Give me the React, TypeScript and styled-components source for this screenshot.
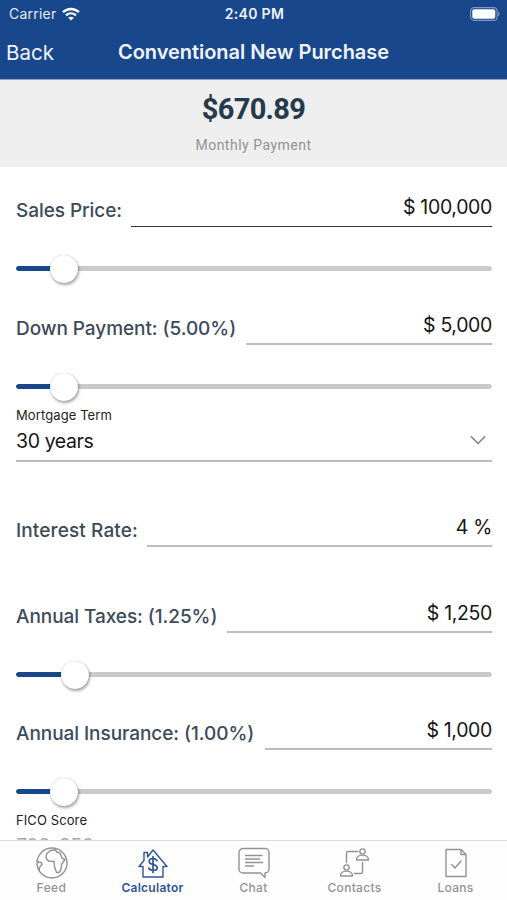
import React from "react";
import styled, { createGlobalStyle } from "styled-components";

const BLUE = "#19478c";

const Global = createGlobalStyle`
  * { box-sizing: border-box; }
  html, body { margin: 0; padding: 0; background: #fff; }
  body { font-family: Inter, "Liberation Sans", sans-serif; overflow: hidden; }
`;

const Screen = styled.div`
  width: 507px;
  height: 900px;
  display: flex;
  flex-direction: column;
  background: #fff;
  overflow: hidden;
`;

const Header = styled.header`
  flex: none;
  height: 80px;
  background: ${BLUE};
  border-bottom: 1px solid #8ba3c8;
  color: #fff;
`;

const StatusBar = styled.div`
  height: 27px;
  padding: 0 7px 0 9px;
  display: grid;
  grid-template-columns: 1fr auto 1fr;
  align-items: center;
  font-size: 14px;
`;

const Carrier = styled.div`
  display: flex;
  align-items: center;
  gap: 6px;
  color: #e3e9f3;
  letter-spacing: 0.22px;
`;

const Clock = styled.div`
  font-weight: 600;
  font-size: 14px;
  letter-spacing: 0.3px;
  color: #eef2f8;
`;

const BatteryBox = styled.div`
  display: flex;
  justify-content: flex-end;
`;

const NavBar = styled.div`
  height: 50px;
  padding: 0 6px;
  display: grid;
  grid-template-columns: 1fr auto 1fr;
  align-items: center;
`;

const Back = styled.div`
  font-size: 20.5px;
  color: #f0f4fa;
`;

const Title = styled.h1`
  margin: 0;
  font-size: 20px;
  font-weight: 600;
  letter-spacing: -0.04px;
  color: #f0f4fa;
  white-space: nowrap;
`;

const Summary = styled.section`
  flex: none;
  height: 87px;
  background: #eee;
  display: flex;
  flex-direction: column;
  align-items: center;
`;

const Amount = styled.div`
  margin-top: 11px;
  height: 36px;
  line-height: 36px;
  font-family: Roboto, sans-serif;
  font-weight: 700;
  font-size: 29px;
  letter-spacing: -0.7px;
  color: #243b4d;
`;

const Caption = styled.div`
  margin-top: 9px;
  line-height: 18px;
  font-family: Roboto, sans-serif;
  font-size: 14px;
  letter-spacing: 0.5px;
  color: #929292;
`;

const Form = styled.main`
  flex: none;
  height: 673px;
  padding: 0 15px 0 16px;
  overflow: hidden;
`;

const Row = styled.div<{ $height: number }>`
  height: ${(p) => p.$height}px;
  display: flex;
  align-items: flex-end;
  gap: 10px;
`;

const Label = styled.label<{ $width: number; $spacing?: number }>`
  flex: none;
  width: ${(p) => p.$width}px;
  height: 31px;
  line-height: 30px;
  font-size: 19px;
  font-weight: 500;
  letter-spacing: ${(p) => p.$spacing ?? -0.06}px;
  color: #3c4a5c;
  white-space: nowrap;
`;

const Value = styled.div<{ $active?: boolean }>`
  flex: 1;
  height: 35px;
  line-height: 30px;
  text-align: right;
  font-size: 19.5px;
  letter-spacing: -0.35px;
  color: #161616;
  border-bottom: ${(p) => (p.$active ? "1px solid #343136" : "2px solid #bdbdbd")};
`;

const SliderBox = styled.div<{ $height: number }>`
  height: ${(p) => p.$height}px;
  padding-top: 26px;
`;

const Track = styled.div<{ $fill: number }>`
  height: 31px;
  display: flex;
  align-items: center;
  padding-left: ${(p) => p.$fill - 14.5}px;
  background:
    linear-gradient(${BLUE}, ${BLUE}) 2px 50% / ${(p) => p.$fill}px 5px no-repeat,
    radial-gradient(circle at 2.5px 50%, ${BLUE} 2px, transparent 2.7px) no-repeat,
    radial-gradient(circle at calc(100% - 2.5px) 50%, #cacaca 2px, transparent 2.7px) no-repeat,
    linear-gradient(#cacaca, #cacaca) 2px 50% / calc(100% - 4px) 5px no-repeat;
`;

const Thumb = styled.div`
  width: 28px;
  height: 28px;
  border-radius: 50%;
  background: #fff;
  box-shadow: 0 0 1px rgba(0, 0, 0, 0.35), 1px 2px 3px rgba(0, 0, 0, 0.35);
`;

const SelectCaption = styled.div<{ $spacing?: number }>`
  height: 18px;
  line-height: 17px;
  font-size: 13px;
  letter-spacing: ${(p) => p.$spacing ?? 0.1}px;
  color: #222;
`;

const Select = styled.div<{ $faded?: boolean }>`
  height: 37px;
  display: flex;
  justify-content: space-between;
  padding: 1px 6px 0 0;
  line-height: 30px;
  font-size: 19.5px;
  letter-spacing: -0.4px;
  color: ${(p) => (p.$faded ? "#a8a8a8" : "#161616")};
  border-bottom: 2px solid #bdbdbd;
`;

const TabBar = styled.nav`
  flex: none;
  height: 60px;
  display: grid;
  grid-template-columns: repeat(5, 101px);
  justify-content: center;
  background: #fefefe;
  border-top: 1px solid #dcdcdc;
`;

const Tab = styled.div<{ $active?: boolean; $spacing: number }>`
  display: flex;
  flex-direction: column;
  align-items: center;
  padding-top: 5px;
  color: ${(p) => (p.$active ? "#2c5597" : "#929292")};
  font-size: 12px;
  font-weight: ${(p) => (p.$active ? 600 : 500)};
  letter-spacing: ${(p) => p.$spacing}px;
  line-height: 16px;
  svg { display: block; }
`;

const Glyph = ({ children }: { children: React.ReactNode }) => (
  <svg width="34" height="34" viewBox="0 0 34 34" fill="none" stroke="currentColor" strokeWidth="1.4" strokeLinejoin="round" strokeLinecap="round">
    {children}
  </svg>
);

const WifiIcon = () => (
  <svg width="18" height="14" viewBox="0 0 18 14" fill="none" stroke="#fff" strokeWidth="2.3">
    <path d="M1 5.2C5.500.9 12.500.9 17 5.200" />
    <path d="M4 8.400c2.900-2.700 7.100-2.700 10 0" />
    <path d="M9 13.600 6.200 10.800c1.600-1.400 4-1.400 5.600 0z" fill="#fff" stroke="none" />
  </svg>
);

const BatteryIcon = () => (
  <svg width="30" height="14" viewBox="0 0 30 14">
    <rect x=".6" y=".6" width="26.5" height="12.8" rx="3.5" fill="none" stroke="#8199c3" strokeWidth="1.1" />
    <rect x="2.3" y="2.3" width="23" height="9.4" rx="2" fill="#fff" />
    <path d="M28.200 4.600c1.700.6 1.700 4.200 0 4.800z" fill="#8199c3" />
  </svg>
);

const ChevronIcon = () => (
  <svg width="16" height="30" viewBox="0 0 16 30" fill="none" stroke="#858585" strokeWidth="1.5">
    <path d="M.9 10.400 8 17.500l7.100-7.100" />
  </svg>
);

const Slider = ({ fill, height }: { fill: number; height: number }) => (
  <SliderBox $height={height}>
    <Track $fill={fill}>
      <Thumb />
    </Track>
  </SliderBox>
);

export default function App() {
  return (
    <Screen>
      <Global />
      <Header>
        <StatusBar>
          <Carrier>Carrier <WifiIcon /></Carrier>
          <Clock>2:40 PM</Clock>
          <BatteryBox><BatteryIcon /></BatteryBox>
        </StatusBar>
        <NavBar>
          <Back>Back</Back>
          <Title>Conventional New Purchase</Title>
        </NavBar>
      </Header>
      <Summary>
        <Amount>$670.89</Amount>
        <Caption>Monthly Payment</Caption>
      </Summary>
      <Form>
        <Row $height={60}>
          <Label $width={105}>Sales Price:</Label>
          <Value $active>$ 100,000</Value>
        </Row>
        <Slider fill={48} height={83} />
        <Row $height={35}>
          <Label $width={220}>Down Payment: (5.00%)</Label>
          <Value>$ 5,000</Value>
        </Row>
        <Slider fill={48} height={62} />
        <SelectCaption>Mortgage Term</SelectCaption>
        <Select>30 years <ChevronIcon /></Select>
        <Row $height={85}>
          <Label $width={121} $spacing={0.12}>Interest Rate:</Label>
          <Value>4 %</Value>
        </Row>
        <Row $height={86}>
          <Label $width={201}>Annual Taxes: (1.25%)</Label>
          <Value>$ 1,250</Value>
        </Row>
        <Slider fill={59} height={82} />
        <Row $height={35}>
          <Label $width={239}>Annual Insurance: (1.00%)</Label>
          <Value>$ 1,000</Value>
        </Row>
        <Slider fill={48} height={62} />
        <SelectCaption>FICO Score</SelectCaption>
        <Select $faded>700-850</Select>
      </Form>
      <TabBar>
        <Tab $spacing={0.4}>
          <Glyph>
            <circle cx="17" cy="17" r="15" />
            <path d="M15.500 4.500 11.500 8l-.5 4 2.500 3 5.500.5.5 5 2 6h2.500l2-3 .5-5 3.500-5-3-1.500-2-5-3.500-1-1-2.300z" />
            <path d="M2.300 14.500l1.500 1.700 2.500.3.700 2-2.500 3-.3 3" />
          </Glyph>
          Feed
        </Tab>
        <Tab $active $spacing={0.28}>
          <Glyph>
            <path d="M7 31V20.500H3L8 14.500V6.500h3.500v4.500L17 4l14 16.500h-4V31z" />
            <path d="M21 14.500c-1-1.500-2.300-2-4-2-2.300 0-3.800 1-3.800 2.900 0 4.300 8 2 8 6.100 0 2-1.700 3-4.100 3-2 0-3.500-.7-4.300-2.300M17 10.500v16" strokeWidth="1.700" />
          </Glyph>
          Calculator
        </Tab>
        <Tab $spacing={0.3}>
          <Glyph>
            <path d="M6 2.500h22a4 4 0 0 1 4 4v16.500a4 4 0 0 1-4 4v4.500L23.500 27H6a4 4 0 0 1-4-4V6.500a4 4 0 0 1 4-4z" />
            <path d="M8.500 9.500h16.500M8.500 13h14M8.500 16.500h17M8.500 20h8" />
          </Glyph>
          Chat
        </Tab>
        <Tab $spacing={0.3}>
          <Glyph>
            <circle cx="24.500" cy="5.500" r="2.600" />
            <path d="M18.500 14c0-6.500 12-6.500 12 0z" />
            <circle cx="8.500" cy="21.500" r="2.600" />
            <path d="M2.500 30c0-6.500 12-6.500 12 0z" />
            <path d="M8.500 16.500V7a1.500 1.500 0 0 1 1.500-1.500h10M24.500 16.500V26a1.500 1.500 0 0 1-1.500 1.500h-6.500" />
          </Glyph>
          Contacts
        </Tab>
        <Tab $spacing={0.3}>
          <Glyph>
            <path d="M7 3.500h15l5 5v22H7zM22 3.500v5h5" />
            <path d="M12.500 18.500l3.500 3.500 6-7" />
          </Glyph>
          Loans
        </Tab>
      </TabBar>
    </Screen>
  );
}
